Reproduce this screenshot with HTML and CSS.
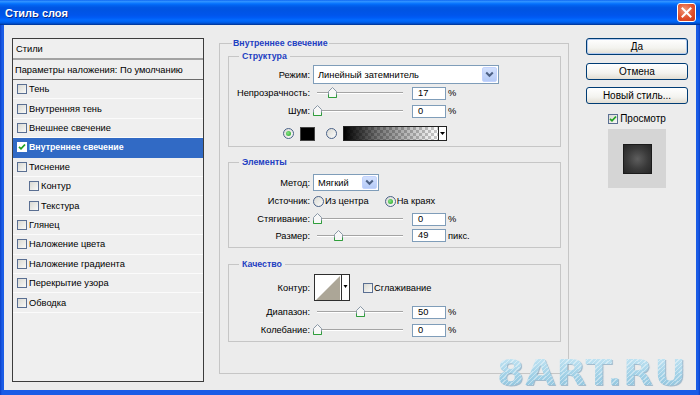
FILE: index.html
```html
<!DOCTYPE html>
<html lang="ru">
<head>
<meta charset="utf-8">
<title>Стиль слоя</title>
<link rel="stylesheet" href="styles.css">
</head>
<body>
<div class="window">
  <div class="titlebar">
    <span class="title">Стиль слоя</span>
    <span class="close"><svg width="11" height="11" viewBox="0 0 11 11"><path d="M1.5 1.5 L9.5 9.5 M9.5 1.5 L1.5 9.5" stroke="#fff" stroke-width="2" stroke-linecap="square"/></svg></span>
  </div>
  <div class="client">
    <div class="styles-list">
      <div class="list-head">Стили</div>
      <div class="list-blend">Параметры наложения: По умолчанию</div>
      <div class="list-item"><span class="cb"></span>Тень</div>
      <div class="list-item"><span class="cb"></span>Внутренняя тень</div>
      <div class="list-item"><span class="cb"></span>Внешнее свечение</div>
      <div class="list-item selected"><span class="cb"><svg width="8" height="8" viewBox="0 0 8 8"><path d="M1 3.8 L3 5.8 L7 1.5" stroke="#21a121" stroke-width="1.8" fill="none"/></svg></span>Внутреннее свечение</div>
      <div class="list-item"><span class="cb"></span>Тиснение</div>
      <div class="list-item sub"><span class="cb"></span>Контур</div>
      <div class="list-item sub"><span class="cb"></span>Текстура</div>
      <div class="list-item"><span class="cb"></span>Глянец</div>
      <div class="list-item"><span class="cb"></span>Наложение цвета</div>
      <div class="list-item"><span class="cb"></span>Наложение градиента</div>
      <div class="list-item"><span class="cb"></span>Перекрытие узора</div>
      <div class="list-item"><span class="cb"></span>Обводка</div>
    </div>

    <fieldset class="group main-group">
      <legend>Внутреннее свечение</legend>

      <fieldset class="group sub-group g-structure">
        <legend>Структура</legend>
        <div class="row h19">
          <span class="lbl">Режим:</span>
          <div class="select sel-mode"><span class="val">Линейный затемнитель</span><span class="dd"><svg width="9" height="7" viewBox="0 0 9 7"><path d="M1.2 1.5 L4.5 4.8 L7.8 1.5" stroke="#4d6185" stroke-width="2" fill="none"/></svg></span></div>
        </div>
        <div class="row h18">
          <span class="lbl">Непрозрачность:</span>
          <div class="slider"><div class="track"><span class="thumb" style="left:17%"><svg width="9" height="11" viewBox="0 0 9 11"><path d="M0.5 4.5 L4.5 0.5 L8.5 4.5 L8.5 10.5 L0.5 10.5 Z" fill="#f7f7f7" stroke="#8a98a6"/><path d="M0.5 7.5 V10.5 H8.5 V7.5" stroke="#2f9f3a" fill="none"/></svg></span></div></div>
          <span class="num">17</span><span class="unit">%</span>
        </div>
        <div class="row h18">
          <span class="lbl">Шум:</span>
          <div class="slider"><div class="track"><span class="thumb" style="left:0%"><svg width="9" height="11" viewBox="0 0 9 11"><path d="M0.5 4.5 L4.5 0.5 L8.5 4.5 L8.5 10.5 L0.5 10.5 Z" fill="#f7f7f7" stroke="#8a98a6"/><path d="M0.5 7.5 V10.5 H8.5 V7.5" stroke="#2f9f3a" fill="none"/></svg></span></div></div>
          <span class="num">0</span><span class="unit">%</span>
        </div>
        <div class="row swatch-row">
          <span class="rb on"></span>
          <span class="swatch"></span>
          <span class="rb rb-grad"></span>
          <span class="gradbox"><span class="grad"></span><span class="gradarrow"><svg width="5" height="3" viewBox="0 0 5 3"><path d="M0 0 H5 L2.5 3 Z" fill="#000"/></svg></span></span>
        </div>
      </fieldset>

      <fieldset class="group sub-group g-elements">
        <legend>Элементы</legend>
        <div class="row h17">
          <span class="lbl">Метод:</span>
          <div class="select sel-method"><span class="val">Мягкий</span><span class="dd"><svg width="9" height="7" viewBox="0 0 9 7"><path d="M1.2 1.5 L4.5 4.8 L7.8 1.5" stroke="#4d6185" stroke-width="2" fill="none"/></svg></span></div>
        </div>
        <div class="row h20">
          <span class="lbl">Источник:</span>
          <span class="rb"></span><span class="opt">Из центра</span>
          <span class="rb on rb-edge"></span><span class="opt">На краях</span>
        </div>
        <div class="row h16">
          <span class="lbl">Стягивание:</span>
          <div class="slider"><div class="track"><span class="thumb" style="left:0%"><svg width="9" height="11" viewBox="0 0 9 11"><path d="M0.5 4.5 L4.5 0.5 L8.5 4.5 L8.5 10.5 L0.5 10.5 Z" fill="#f7f7f7" stroke="#8a98a6"/><path d="M0.5 7.5 V10.5 H8.5 V7.5" stroke="#2f9f3a" fill="none"/></svg></span></div></div>
          <span class="num">0</span><span class="unit">%</span>
        </div>
        <div class="row h17">
          <span class="lbl">Размер:</span>
          <div class="slider"><div class="track"><span class="thumb" style="left:24%"><svg width="9" height="11" viewBox="0 0 9 11"><path d="M0.5 4.5 L4.5 0.5 L8.5 4.5 L8.5 10.5 L0.5 10.5 Z" fill="#f7f7f7" stroke="#8a98a6"/><path d="M0.5 7.5 V10.5 H8.5 V7.5" stroke="#2f9f3a" fill="none"/></svg></span></div></div>
          <span class="num">49</span><span class="unit">пикс.</span>
        </div>
      </fieldset>

      <fieldset class="group sub-group g-quality">
        <legend>Качество</legend>
        <div class="row h27">
          <span class="lbl">Контур:</span>
          <span class="contour"><svg width="36" height="27" viewBox="0 0 36 27"><rect x="0.5" y="0.5" width="35" height="26" fill="#fff" stroke="#2e2e2e"/><path d="M2 26 L26 2 L26 26 Z" fill="#aca697"/><line x1="27.5" y1="1" x2="27.5" y2="26" stroke="#2e2e2e"/><path d="M29.5 11 H33.5 L31.5 14 Z" fill="#000"/></svg></span>
          <span class="cb cb-aa"></span><span class="opt">Сглаживание</span>
        </div>
        <div class="row h18 mt2">
          <span class="lbl">Диапазон:</span>
          <div class="slider"><div class="track"><span class="thumb" style="left:50%"><svg width="9" height="11" viewBox="0 0 9 11"><path d="M0.5 4.5 L4.5 0.5 L8.5 4.5 L8.5 10.5 L0.5 10.5 Z" fill="#f7f7f7" stroke="#8a98a6"/><path d="M0.5 7.5 V10.5 H8.5 V7.5" stroke="#2f9f3a" fill="none"/></svg></span></div></div>
          <span class="num">50</span><span class="unit">%</span>
        </div>
        <div class="row h18">
          <span class="lbl">Колебание:</span>
          <div class="slider"><div class="track"><span class="thumb" style="left:0%"><svg width="9" height="11" viewBox="0 0 9 11"><path d="M0.5 4.5 L4.5 0.5 L8.5 4.5 L8.5 10.5 L0.5 10.5 Z" fill="#f7f7f7" stroke="#8a98a6"/><path d="M0.5 7.5 V10.5 H8.5 V7.5" stroke="#2f9f3a" fill="none"/></svg></span></div></div>
          <span class="num">0</span><span class="unit">%</span>
        </div>
      </fieldset>
    </fieldset>

    <div class="side">
      <div class="btn default">Да</div>
      <div class="btn b-cancel">Отмена</div>
      <div class="btn b-new">Новый стиль...</div>
      <div class="preview-toggle"><span class="cb"><svg width="8" height="8" viewBox="0 0 8 8"><path d="M1 3.8 L3 5.8 L7 1.5" stroke="#21a121" stroke-width="1.8" fill="none"/></svg></span><span>Просмотр</span></div>
      <div class="preview"><span class="preview-sq"></span></div>
    </div>
  </div>
  <div class="watermark">8ART.RU</div>
</div>
</body>
</html>
```

FILE: styles.css
```css
* { box-sizing: border-box; }
html, body { margin: 0; padding: 0; }
body {
  width: 700px;
  height: 395px;
  overflow: hidden;
  font-family: "Liberation Sans", Arial, sans-serif;
  font-size: 9.3px;
  color: #000;
  background: #0b4fdc;
}

.window {
  position: relative;
  width: 700px;
  height: 395px;
  display: flex;
  flex-direction: column;
  background: linear-gradient(to right, #0a3fc8, #1a5ce6 2px, #1a5ce6 698px, #0a3fc8);
}

.titlebar {
  flex: none;
  height: 25px;
  display: flex;
  align-items: center;
  justify-content: space-between;
  padding: 0 4px 0 5px;
  background: linear-gradient(to bottom, #0058ee 0%, #3593ff 4%, #288eff 8%, #127dff 12%, #036ffc 16%, #0262ee 22%, #0057e5 30%, #0054e3 40%, #0055eb 60%, #005bf5 70%, #026afe 80%, #0062ef 88%, #0052d6 93%, #0040ab 97%, #003092 100%);
}
.title {
  color: #fff;
  font-weight: bold;
  font-size: 11px;
  text-shadow: 1px 1px 0 #0a2a8a;
  margin-top: 1px;
}
.close {
  width: 19px;
  height: 19px;
  border: 1px solid #fff;
  border-radius: 3px;
  background: radial-gradient(circle at 40% 35%, #f09a7c, #e0502c 55%, #c8381a);
  display: flex;
  align-items: center;
  justify-content: center;
}

.client {
  flex: 1;
  margin: 0 4px 5px 4px;
  background: #ececec;
  display: flex;
  align-items: flex-start;
  padding: 13px 0 0 8px;
}

/* left list */
.styles-list {
  width: 192px;
  height: 344px;
  border: 1px solid #3c3c3c;
  background: #efefef;
  display: flex;
  flex-direction: column;
}
.list-head {
  height: 21px;
  padding-left: 3px;
  display: flex;
  align-items: center;
  border-bottom: 2px solid #a2a2a2;
}
.list-blend {
  height: 20px;
  padding-left: 2px;
  display: flex;
  align-items: center;
  border-bottom: 1px solid #6a6a6a;
}
.list-item {
  height: 19.42px;
  flex: none;
  display: flex;
  align-items: center;
  padding-left: 4px;
  border-bottom: 1px solid #fbfbfb;
}
.list-item.sub { padding-left: 16px; }
.list-item.selected {
  background: #316ac5;
  color: #fff;
  font-weight: bold;
  font-size: 8.8px;
  border-bottom-color: #316ac5;
}

.cb {
  flex: none;
  width: 10px;
  height: 10px;
  border: 1px solid #5a6f92;
  background: linear-gradient(135deg, #d9d9d3, #f9f9f7);
  margin-right: 2px;
  display: inline-flex;
  align-items: center;
  justify-content: center;
}
.selected .cb { background: #fff; border-color: #fff; }

/* group boxes */
.group {
  margin: 0;
  border: 1px solid #c6c6c6;
  min-width: 0;
}
.group > legend {
  font-weight: bold;
  font-size: 8.8px;
  line-height: 12px;
  color: #1e3fc2;
}
.main-group {
  width: 350px;
  margin: -1px 0 0 15px;
  padding: 0 7px 31px 8px;
}
.main-group > legend {
  padding: 0 1px;
  margin-left: 4px;
}
.sub-group > legend {
  padding: 0 3px;
  margin-left: 10px;
}
.g-structure { margin-top: 1px; padding: 3px 0 5px 0; }
.g-elements { margin-top: 9px; padding: 6px 0 3px 0; }
.g-quality { margin-top: 10px; padding: 4px 0 2px 0; }

.row {
  display: flex;
  align-items: center;
}
.h16 { height: 16px; }
.h17 { height: 17px; }
.h18 { height: 18px; }
.h19 { height: 19px; }
.h20 { height: 20px; }
.h27 { height: 27px; }
.mt2 { margin-top: 2px; }

.lbl {
  flex: none;
  width: 81px;
  text-align: right;
  margin-right: 3px;
}

.select {
  display: flex;
  align-items: center;
  background: #fff;
  border: 1px solid #7f9db9;
  padding: 1px 1px 1px 4px;
}
.select .val { flex: 1; }
.sel-mode { width: 186px; height: 19px; }
.sel-method { width: 66px; height: 17px; }
.dd {
  width: 15px;
  height: 100%;
  border: 1px solid #c3d3fd;
  border-radius: 2px;
  background: linear-gradient(#d2e0fd, #b6cbf7);
  display: flex;
  align-items: center;
  justify-content: center;
}

.slider {
  flex: none;
  width: 91px;
  height: 12px;
  padding: 0 1px 0 4px;
  margin-right: 8px;
  display: flex;
  align-items: center;
}
.track {
  position: relative;
  flex: 1;
  height: 2px;
  border-top: 1px solid #a4a4a4;
  border-bottom: 1px solid #fff;
}
.thumb {
  position: absolute;
  top: -6px;
  margin-left: -4px;
  width: 9px;
  height: 11px;
  display: block;
}
.thumb svg { display: block; }

.num {
  flex: none;
  width: 34px;
  height: 13px;
  border: 1px solid #7f9db9;
  background: #fff;
  padding-left: 5px;
  line-height: 11px;
}
.unit { margin-left: 2px; }

.rb {
  flex: none;
  width: 11px;
  height: 11px;
  border-radius: 50%;
  border: 1px solid #4a6288;
  background: linear-gradient(135deg, #d9d9d3, #fbfbfa);
  display: flex;
  align-items: center;
  justify-content: center;
  margin-right: 1px;
}
.rb.on::after {
  content: "";
  width: 5px;
  height: 5px;
  border-radius: 50%;
  background: radial-gradient(circle at 40% 40%, #86e486, #22a022);
}
.opt { margin-right: 16px; }
.rb-edge { margin-right: 1px; }

.swatch-row {
  margin-top: 6px;
  height: 15px;
  padding-left: 54px;
}
.swatch {
  width: 15px;
  height: 14px;
  background: #000;
  border: 1px solid #444;
  margin: 0 11px 0 5px;
}
.rb-grad { margin-right: 6px; }
.gradbox { display: flex; height: 15px; }
.grad {
  width: 96px;
  height: 15px;
  border: 1px solid #222;
  background:
    linear-gradient(to right, #000, rgba(0,0,0,0.55) 35%, rgba(0,0,0,0)),
    repeating-conic-gradient(#c9c9c9 0 25%, #fff 0 50%) 0 0 / 6px 6px;
}
.gradarrow {
  width: 8px;
  height: 15px;
  border: 1px solid #222;
  border-left: none;
  background: #fff;
  display: flex;
  align-items: center;
  justify-content: center;
}

.contour { display: flex; margin: 0 13px 0 1px; }
.contour svg { display: block; }
.cb-aa { margin-right: 1px; }

/* right column */
.side {
  width: 102px;
  margin-left: 17px;
  display: flex;
  flex-direction: column;
  align-items: center;
}
.btn {
  width: 102px;
  height: 17px;
  border: 1px solid #003c74;
  border-radius: 3px;
  background: linear-gradient(#ffffff, #f3f3ef 60%, #e2ded3);
  display: flex;
  align-items: center;
  justify-content: center;
  font-size: 10px;
}
.btn.default { box-shadow: inset 0 0 0 1px #b3cbf1; }
.b-cancel { margin-top: 8px; }
.b-new { margin-top: 7px; }
.preview-toggle {
  margin-top: 9px;
  height: 11px;
  display: flex;
  align-items: center;
  font-size: 10px;
}
.preview {
  margin-top: 5px;
  width: 58px;
  height: 59px;
  background: #d5d5d5;
  display: flex;
  align-items: center;
  justify-content: center;
}
.preview-sq {
  width: 29px;
  height: 30px;
  border: 1px solid #1b1b1b;
  background: radial-gradient(circle, #5e5e5e 0%, #3a3a3a 55%, #262626 100%);
}

/* watermark overlay */
.watermark {
  position: absolute;
  left: 497px;
  top: 355px;
  font-family: "DejaVu Sans", sans-serif;
  font-weight: bold;
  font-size: 36px;
  line-height: 36px;
  letter-spacing: 1px;
  transform: scaleX(1.08);
  transform-origin: left top;
  color: transparent;
  background:
    repeating-linear-gradient(-45deg, rgba(255,255,255,0.4) 0 1px, rgba(255,255,255,0) 1px 3px),
    linear-gradient(#c6e6f4, #9fcfe5 60%, #8fc2dc);
  -webkit-background-clip: text;
  background-clip: text;
  filter: drop-shadow(1px 1px 0 rgba(90,140,175,0.5));
}
```
